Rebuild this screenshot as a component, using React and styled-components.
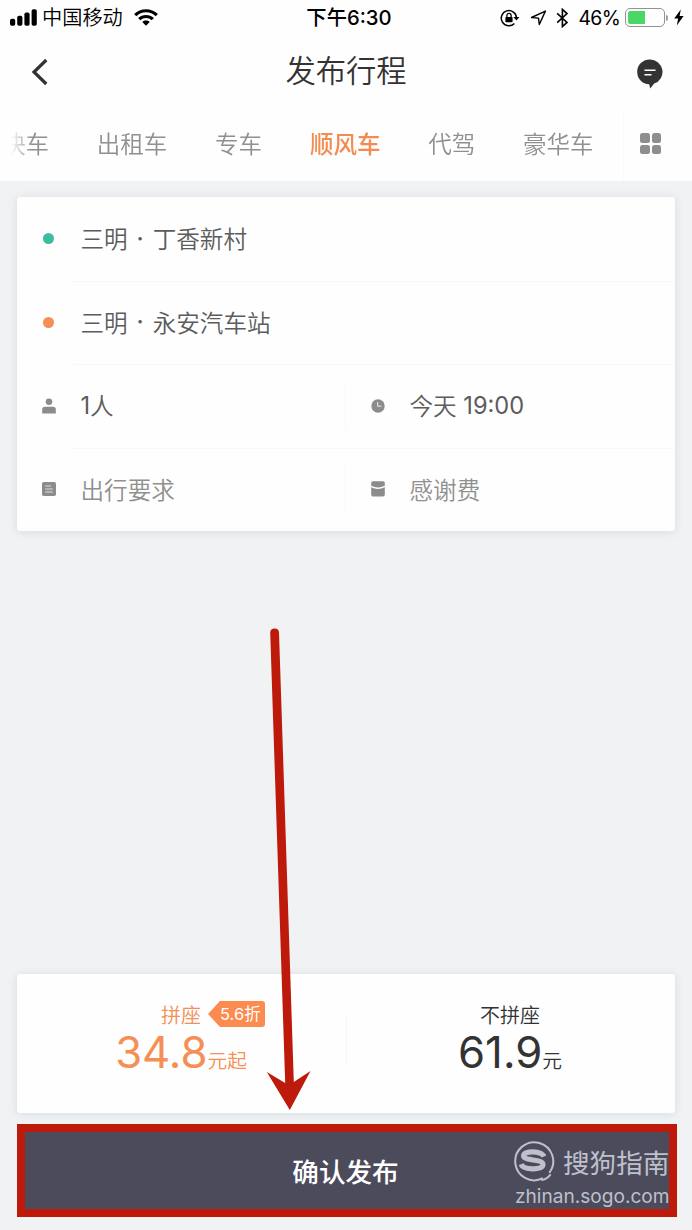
import React from 'react';
import styled, { createGlobalStyle } from 'styled-components';

const TABS = ['快车', '出租车', '专车', '顺风车', '代驾', '豪华车'];

function StatusBar() {
  return (
    <StatusWrapper>
      <StatusSide>
        <svg width="27" height="17" viewBox="0 0 27 17">
          <rect x="0" y="9.8" width="5.2" height="7" rx="1.8" />
          <rect x="7.2" y="6.8" width="5.2" height="10" rx="1.8" />
          <rect x="14.4" y="3.5" width="5.2" height="13.3" rx="1.8" />
          <rect x="21.6" y="0.3" width="5.2" height="16.5" rx="1.8" />
        </svg>
        <Carrier>中国移动</Carrier>
        <svg width="24" height="17" viewBox="0 0 24 17">
          <g fill="none" stroke="#000" strokeWidth="3.2">
            <path d="M1.2 6.1C7.2.3 16.8.3 22.8 6.1" />
            <path d="M5.2 10.2C9 6.6 15 6.6 18.8 10.2" />
          </g>
          <path d="M8.3 13C10.4 11.1 13.6 11.1 15.7 13L12 16.8Z" />
        </svg>
      </StatusSide>
      <Clock>下午6:30</Clock>
      <StatusSide $end>
        <svg width="20" height="18" viewBox="0 0 20 18">
          <path
            d="M16.5 9A7.6 7.6 0 1 0 14.4 14.4"
            fill="none"
            stroke="#000"
            strokeWidth="1.5"
          />
          <path d="M13.4 8H19.4L16.4 11.6Z" />
          <rect x="5.4" y="7.9" width="7.2" height="5.3" rx="0.8" />
          <path d="M6.9 8V6.5a2.1 2.1 0 0 1 4.2 0V8" fill="none" stroke="#000" strokeWidth="1.3" />
        </svg>
        <LocationIcon width="17" height="16" viewBox="0 0 17 16">
          <path
            d="M1.5 7.5L15.4 1.1L9.3 14.5L8.5 8.1Z"
            fill="none"
            stroke="#000"
            strokeWidth="1.4"
            strokeLinejoin="round"
          />
        </LocationIcon>
        <BluetoothIcon width="13" height="20" viewBox="0 0 13 20">
          <path
            d="M1.2 5.3L11 14.4L6.4 18.6V1.4L11 5.6L1.2 14.7"
            fill="none"
            stroke="#000"
            strokeWidth="1.6"
          />
        </BluetoothIcon>
        <Percent>46%</Percent>
        <Battery>
          <BatteryLevel />
        </Battery>
        <BatteryTip />
        <svg width="10" height="17" viewBox="0 0 10 17">
          <path d="M6.8.5L.2 9.6H4.1L2.8 16.5L9.6 6.9H5.6Z" />
        </svg>
      </StatusSide>
    </StatusWrapper>
  );
}

function PersonIcon() {
  return (
    <svg width="14" height="16" viewBox="0 0 14 16">
      <circle cx="7" cy="3.7" r="3.3" />
      <path d="M.2 15.5V11.5Q.2 8.8 3 8.8H11Q13.8 8.8 13.8 11.5V15.5Z" />
    </svg>
  );
}

function ClockIcon() {
  return (
    <svg width="14" height="14" viewBox="0 0 14 14">
      <circle cx="7" cy="7" r="6.7" />
      <path d="M6.6 3V7.2H10.4" fill="none" stroke="#ddd" strokeWidth="1.2" />
    </svg>
  );
}

function NoteIcon() {
  return (
    <svg width="14" height="14" viewBox="0 0 14 14">
      <rect width="14" height="14" rx="1.8" />
      <path d="M3.2 4H9M3.2 7H10.8M3.2 10H10.8" stroke="#ddd" strokeWidth="1.1" />
    </svg>
  );
}

function PacketIcon() {
  return (
    <svg width="14" height="16" viewBox="0 0 14 16">
      <path d="M.2 2Q.2.3 2 .3H12Q13.8.3 13.8 2V4.8Q7 8.4.2 4.8Z" />
      <path d="M.2 6.3Q7 9.9 13.8 6.3V13.4Q13.8 15.5 12 15.5H2Q.2 15.5.2 13.4Z" />
    </svg>
  );
}

export default function App() {
  return (
    <Page>
      <GlobalStyle />
      <Header>
        <StatusBar />
        <NavBar>
          <svg width="18" height="28" viewBox="0 0 18 28">
            <path d="M15.3 2L3 14L15.3 26" fill="none" stroke="#333" strokeWidth="3.2" />
          </svg>
          <Title>发布行程</Title>
          <ChatIcon width="26" height="30" viewBox="0 0 26 30">
            <path
              d="M13 .5A12.4 12.4 0 0 1 17.2 24.6L13.2 29.5L12.2 25.3A12.4 12.4 0 0 1 13 .5Z"
              fill="#333"
            />
            <path d="M7.5 11.3H18.5M7.5 15.8H14.5" stroke="#fff" strokeWidth="1.6" />
          </ChatIcon>
        </NavBar>
        <TabBar>
          <TabList>
            {TABS.map((tab) => (
              <Tab key={tab} $active={tab === '顺风车'}>
                {tab}
              </Tab>
            ))}
          </TabList>
          <MoreButton>
            <i />
            <i />
            <i />
            <i />
          </MoreButton>
        </TabBar>
      </Header>

      <TripCard>
        <Row>
          <Cell>
            <Marker>
              <Dot $color="#3dbc9f" />
            </Marker>
            三明<Separator>·</Separator>丁香新村
          </Cell>
        </Row>
        <Row $line>
          <Cell>
            <Marker>
              <Dot $color="#f48f56" />
            </Marker>
            三明<Separator>·</Separator>永安汽车站
          </Cell>
        </Row>
        <Row $line>
          <Cell>
            <Marker>
              <PersonIcon />
            </Marker>
            <Digits>1</Digits>人
          </Cell>
          <Cell $divided>
            <Marker>
              <ClockIcon />
            </Marker>
            今天<Digits> 19:00</Digits>
          </Cell>
        </Row>
        <Row $line>
          <Cell $muted>
            <Marker>
              <NoteIcon />
            </Marker>
            出行要求
          </Cell>
          <Cell $muted $divided>
            <Marker>
              <PacketIcon />
            </Marker>
            感谢费
          </Cell>
        </Row>
      </TripCard>

      <PriceCard>
        <PriceOption $active>
          <PriceLabel>
            拼座<Discount>5.6折</Discount>
          </PriceLabel>
          <Price>
            <Amount>34.8</Amount>元起
          </Price>
        </PriceOption>
        <PriceOption>
          <PriceLabel>不拼座</PriceLabel>
          <Price>
            <Amount>61.9</Amount>元
          </Price>
        </PriceOption>
      </PriceCard>

      <ConfirmButton>
        确认发布
        <Watermark>
          <WatermarkBrand>
            <svg width="42" height="42" viewBox="0 0 42 42">
              <path
                d="M29.8 37.2A19 19 0 1 1 36.3 31.8M28.2 39Q34 38.6 37.6 33.4"
                fill="none"
                stroke="currentColor"
                strokeWidth="2"
              />
              <path
                d="M31 15.6C28.5 9.6 10.6 9.2 10.6 14.8C10.6 20.4 30 17.6 30 23.6C30 29.6 10.5 29.2 8 23.2"
                fill="none"
                stroke="currentColor"
                strokeWidth="5.2"
              />
            </svg>
            搜狗指南
          </WatermarkBrand>
          <WatermarkUrl>zhinan.sogo.com</WatermarkUrl>
        </Watermark>
      </ConfirmButton>

      <Arrow width="60" height="490" viewBox="0 0 60 490">
        <path d="M5.2 7.5Q5.4 3.5 9.6 3.5Q13.8 3.5 14 7.5L28.8 457L45.5 446L24.8 485L1.8 447L20.2 458Z" />
      </Arrow>
    </Page>
  );
}

const GlobalStyle = createGlobalStyle`
  * {
    box-sizing: border-box;
  }
  body {
    margin: 0;
    background: #f0f2f4;
  }
  svg {
    display: block;
    flex-shrink: 0;
  }
`;

const Page = styled.div`
  position: relative;
  width: 692px;
  height: 1230px;
  display: flex;
  flex-direction: column;
  overflow: hidden;
  background: #f0f2f4;
  font-family: Inter, 'Noto Sans CJK SC', sans-serif;
  font-weight: 350;
  color: #333;
`;

const Header = styled.header`
  height: 181px;
  background: #fefefe;
`;

const StatusWrapper = styled.div`
  height: 35px;
  padding: 0 8px 0 10px;
  display: grid;
  grid-template-columns: 1fr auto 1fr;
  align-items: center;
  color: #000;
`;

const StatusSide = styled.div`
  display: flex;
  align-items: center;
  justify-content: ${({ $end }) => ($end ? 'flex-end' : 'flex-start')};
`;

const Carrier = styled.span`
  margin: 0 11px 0 5px;
  padding-top: 1px;
  font-size: 20.2px;
  line-height: 30px;
  font-weight: 350;
`;

const Clock = styled.span`
  margin-left: 4px;
  font-size: 20.3px;
  line-height: 30px;
  font-weight: 500;
`;

const LocationIcon = styled.svg`
  margin-left: 10px;
`;

const BluetoothIcon = styled.svg`
  margin-left: 9px;
`;

const Percent = styled.span`
  margin: 0 5px 0 10px;
  font-size: 19.4px;
  font-weight: 400;
  letter-spacing: -0.7px;
`;

const Battery = styled.div`
  width: 40px;
  height: 19px;
  padding: 2px;
  border: 1.5px solid #929292;
  border-radius: 5px;
`;

const BatteryLevel = styled.div`
  width: 17px;
  height: 100%;
  border-radius: 2px 0 0 2px;
  background: #4bd763;
`;

const BatteryTip = styled.div`
  width: 2px;
  height: 6px;
  margin: 0 6px 0 1px;
  border-radius: 0 2px 2px 0;
  background: #a0a0a0;
`;

const NavBar = styled.div`
  height: 73px;
  padding: 0 29px 0 31px;
  display: flex;
  align-items: center;
  justify-content: space-between;
`;

const Title = styled.h1`
  margin: 0 0 2px 6px;
  font-size: 30.3px;
  line-height: 44px;
  font-weight: 350;
`;

const ChatIcon = styled.svg`
  margin-top: 4px;
`;

const TabBar = styled.nav`
  height: 73px;
  display: flex;
  align-items: center;
`;

const TabList = styled.div`
  width: 624px;
  height: 73px;
  padding-left: 2px;
  display: flex;
  align-items: center;
  gap: 47.8px;
  border-right: 1px solid #fafafa;
  overflow: hidden;
  mask-image: linear-gradient(to right, transparent 11px, #000 32px);
`;

const Tab = styled.span`
  flex-shrink: 0;
  font-size: 23.5px;
  line-height: 34px;
  font-weight: ${({ $active }) => ($active ? 500 : 350)};
  color: ${({ $active }) => ($active ? '#f48b50' : '#909090')};
`;

const MoreButton = styled.div`
  margin: 0 0 2px 16px;
  display: grid;
  grid-template-columns: 9.5px 9.5px;
  gap: 2px;
  i {
    height: 9.5px;
    border-radius: 2.5px;
    background: #8e8e8e;
  }
`;

const Card = styled.section`
  width: 658px;
  margin-left: 17px;
  border-radius: 3px;
  background: #fefefe;
  box-shadow: 0 1px 10px rgba(60, 70, 80, 0.12);
`;

const TripCard = styled(Card)`
  margin-top: 16px;
  height: 334px;
  display: grid;
  grid-template-rows: repeat(4, 1fr);
`;

const Row = styled.div`
  display: grid;
  grid-auto-flow: column;
  grid-auto-columns: 1fr;
  align-items: center;
  background: ${({ $line }) =>
    $line ? 'linear-gradient(#f8f8f8, #f8f8f8) 56px 0 / 600px 1px no-repeat' : 'none'};
`;

const Cell = styled.div`
  height: 50px;
  padding-bottom: 1px;
  display: flex;
  align-items: center;
  font-size: 23.6px;
  white-space: pre;
  color: ${({ $muted }) => ($muted ? '#909090' : '#5c5c5c')};
  box-shadow: ${({ $divided }) => ($divided ? '-1px 0 #f8f8f8' : 'none')};
`;

const Marker = styled.span`
  width: 63.5px;
  padding-top: 1px;
  display: flex;
  justify-content: center;
  fill: #8c8c8c;
`;

const Dot = styled.span`
  width: 11px;
  height: 11px;
  border-radius: 50%;
  background: ${({ $color }) => $color};
`;

const Separator = styled.span`
  width: 25px;
  text-align: center;
  font-weight: 500;
`;

const Digits = styled.span`
  font-weight: 400;
`;

const PriceCard = styled(Card)`
  margin-top: 443px;
  height: 139px;
  display: grid;
  grid-template-columns: 1fr 1fr;
  background: linear-gradient(#f6f6f6, #f6f6f6) 329px 42px / 1px 50px no-repeat #fefefe;
`;

const PriceOption = styled.div`
  padding-top: 25px;
  display: flex;
  flex-direction: column;
  align-items: center;
  color: ${({ $active }) => ($active ? '#f48f56' : '#333')};
`;

const PriceLabel = styled.div`
  height: 30px;
  display: flex;
  align-items: center;
  margin-right: 1px;
  font-size: 20px;
`;

/* hangs off the label so the label itself stays centred over the price */
const Discount = styled.span`
  width: 57px;
  height: 26px;
  margin: 0 -64px 0 7px;
  padding-left: 12px;
  border-radius: 3px;
  background: #fb8b4e;
  clip-path: polygon(0 50%, 12px 0, 100% 0, 100% 100%, 12px 100%);
  color: #fff;
  font-size: 16.5px;
  line-height: 26px;
  font-weight: 400;
`;

const Price = styled.div`
  height: 48px;
  margin-right: 1px;
  display: flex;
  align-items: baseline;
  font-size: 19.7px;
  line-height: 47px;
`;

const Amount = styled.span`
  font-size: 43.7px;
  font-weight: 400;
`;

const ConfirmButton = styled.button`
  position: relative;
  width: 660px;
  height: 93px;
  margin: 11px 0 0 17px;
  padding: 0 3px 0 0;
  border: 8px solid #bd1a0b;
  background: #4b4b5b;
  color: #fff;
  font: 500 26.6px/38px 'Noto Sans CJK SC', sans-serif;
`;

const Watermark = styled.div`
  position: absolute;
  right: 0;
  top: 9px;
  width: 156px;
  color: #bfc0cb;
  text-align: left;
`;

const WatermarkBrand = styled.div`
  height: 42px;
  display: flex;
  align-items: center;
  gap: 8px;
  font-size: 26.6px;
  font-weight: 400;
  white-space: nowrap;
`;

const WatermarkUrl = styled.div`
  margin: 1px 0 0 2px;
  font: 400 19.1px/24px Inter, sans-serif;
  white-space: nowrap;
`;

const Arrow = styled.svg`
  position: absolute;
  left: 265px;
  top: 625px;
  fill: #bd1a0b;
`;
